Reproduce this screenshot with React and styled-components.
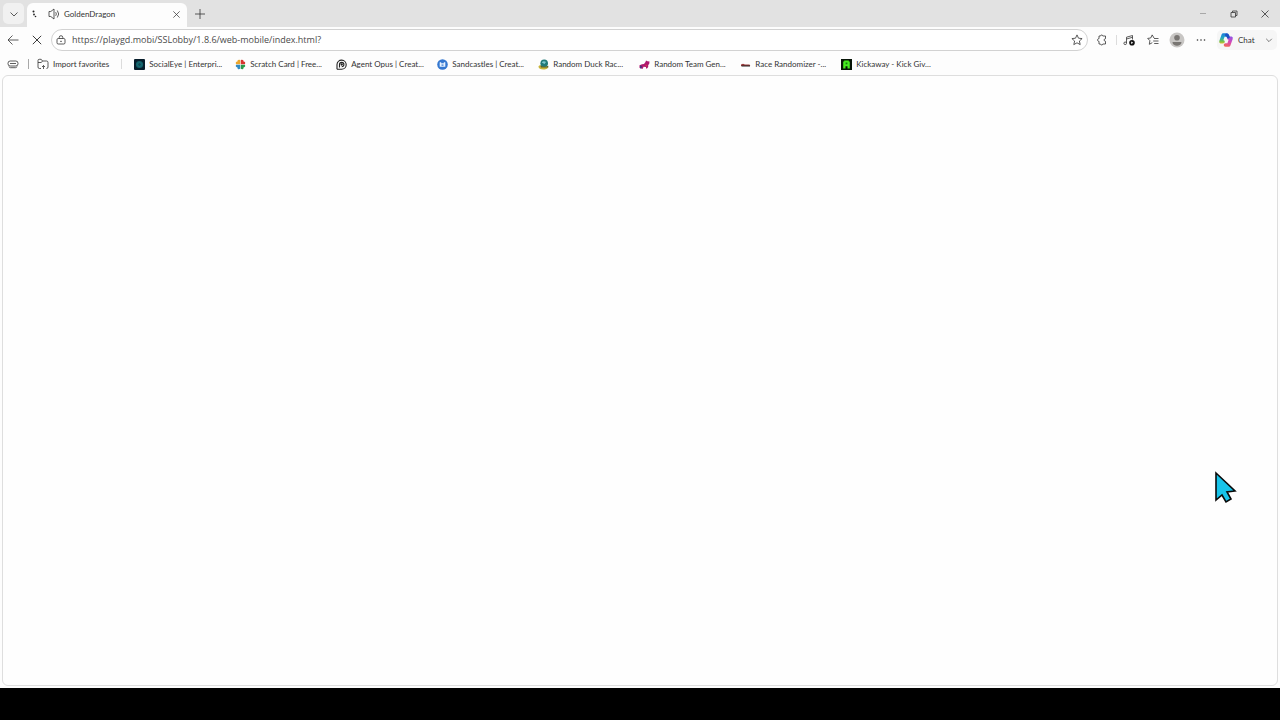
import styled, { createGlobalStyle } from "styled-components";

const bookmarks = [
  { label: "SocialEye | Enterpri...", icon: "eye" },
  { label: "Scratch Card | Free...", icon: "clover" },
  { label: "Agent Opus | Creat...", icon: "opus" },
  { label: "Sandcastles | Creat...", icon: "castle" },
  { label: "Random Duck Rac...", icon: "duck" },
  { label: "Random Team Gen...", icon: "team" },
  { label: "Race Randomizer -...", icon: "race" },
  { label: "Kickaway - Kick Giv...", icon: "kick" },
];

const favicons = {
  eye: (
    <>
      <rect width="11" height="11" rx="1" fill="#071d2b" />
      <circle cx="5.5" cy="5.5" r="3.6" fill="#11616a" />
      <circle cx="5.5" cy="5.5" r="1.8" fill="#0d4a55" stroke="#2a8088" strokeWidth="0.5" />
    </>
  ),
  clover: (
    <>
      <path d="M5.2 5.2V1.2C3.6.2 2.2 1.2 2.5 2.6 1 2.5.2 4 1.2 5.2Z" fill="#eba62e" />
      <path d="M5.8 5.2V1.2C7.4.2 8.8 1.2 8.5 2.6 10 2.5 10.8 4 9.8 5.2Z" fill="#d8352f" />
      <path d="M5.2 5.8v4C3.6 10.8 2.2 9.8 2.5 8.4 1 8.5.2 7 1.2 5.8Z" fill="#318bc4" />
      <path d="M5.8 5.8v4C7.4 10.8 8.8 9.8 8.5 8.4 10 8.5 10.8 7 9.8 5.8Z" fill="#299a4a" />
    </>
  ),
  opus: (
    <g fill="none" stroke="#222" strokeWidth="1.1">
      <path d="M1 10.3V5.500a4.600 4.600 0 1 1 4.600 4.800H1" />
      <path d="M3.500 8.500V5.600a2.200 2.200 0 1 1 2.200 2.200" />
      <circle cx="5.7" cy="5.5" r="0.6" fill="#222" />
    </g>
  ),
  castle: (
    <>
      <circle cx="5.5" cy="5.5" r="5.3" fill="#3578d0" />
      <path d="M2.700 3.200h1.500v1h2.600v-1h1.500v4.600H2.700Z" fill="#e9f3ff" />
      <path d="M4.500 5.500h2v1.200h-2Z" fill="#3578d0" />
    </>
  ),
  duck: (
    <>
      <path d="M.4 7.500C1.500 5.500 3 6.200 5 6.500l5 1c.5 2-1.500 3-4.500 3S.8 9.800.4 7.500Z" fill="#c8b43a" />
      <circle cx="6.2" cy="4.3" r="3.8" fill="#217a79" />
      <path d="M3.800 3.400c1-1.600 3-1.600 4.200-.3L6.500 5Z" fill="#7fc8cf" />
      <path d="M2.300 6.600c2 1.300 5 1.400 8 .2v1.600H3Z" fill="#59602d" />
    </>
  ),
  team: (
    <>
      <path d="M.5 6.200 3 5.300l2-.3L6.500 3 7 1.500l1.500.8 2 .2-.3 2.500-1 1v2L8 9.500H7V8L4.500 7.800l-.7 2H2.500L2 8.500.5 9Z" fill="#ad176f" />
      <path d="m1 6.500 2 .5-.5 2.500H1Z" fill="#48337c" />
      <path d="m6.300 5.500 2 .8-1.200 1.500Z" fill="#e1423d" />
    </>
  ),
  race: (
    <>
      <path d="M1 5.500 3 4.700l2 .7h4.500l.8 1.500H1Z" fill="#9b3a3b" />
      <path d="M1.500 6.500h8.500v1H1.500Z" fill="#222" />
    </>
  ),
  kick: (
    <>
      <rect width="11" height="11" fill="#071407" />
      <path d="M2.200 9.500v-7h1v-1h4.600v1h1v7H6.500V7.300h-2v2.200Z" fill="#47ec20" />
      <path d="M4.600 3.500h1.800v1.800H4.600Z" fill="#167b0e" />
    </>
  ),
};

const Icon = ({ size = 12, box = 12, children }) => (
  <Glyph width={size} height={size} viewBox={`0 0 ${box} ${box}`} aria-hidden="true">
    {children}
  </Glyph>
);

const CloseIcon = ({ size = 10 }) => (
  <Icon size={size} box={10}>
    <path d="m1.500 1.500 7 7m0-7-7 7" />
  </Icon>
);

const ChevronIcon = ({ size = 10 }) => (
  <Icon size={size} box={10}>
    <path d="m1.500 3.500 3.500 3.500 3.500-3.500" />
  </Icon>
);

const TabStrip = () => (
  <Strip>
    <TabSearch type="button" aria-label="Search tabs">
      <ChevronIcon />
    </TabSearch>
    <Tab>
      <Icon size={10} box={10}>
        <g fill="#222" stroke="none">
          <circle cx="2.5" cy="2.5" r="1" />
          <circle cx="3" cy="5.5" r="0.9" />
          <circle cx="4.5" cy="7.5" r="0.8" />
        </g>
      </Icon>
      <IconButton type="button" aria-label="Mute tab" $width={12}>
        <Icon>
          <path d="M1 3.500h1.800L6 1v10L2.800 8.500H1Z" />
          <path d="M7.700 4.200q1.300 1.800 0 3.600M9.300 2.500q2.800 3.500 0 7" />
        </Icon>
      </IconButton>
      <TabTitle>GoldenDragon</TabTitle>
      <IconButton type="button" aria-label="Close tab" $width={10}>
        <CloseIcon size={9} />
      </IconButton>
    </Tab>
    <IconButton type="button" aria-label="New tab" $width={26}>
      <Icon>
        <path d="M6 1v10M1 6h10" />
      </Icon>
    </IconButton>
    <WindowControls>
      <IconButton type="button" aria-label="Minimize" $width={31} $muted>
        <Icon size={8} box={8}>
          <path d="M1 3.500h6" />
        </Icon>
      </IconButton>
      <IconButton type="button" aria-label="Restore" $width={31}>
        <Icon size={8} box={8}>
          <path d="M1 2.500h4.500V7H1ZM2.500 2.200V1H7v4.500H5.800" />
        </Icon>
      </IconButton>
      <IconButton type="button" aria-label="Close window" $width={31}>
        <CloseIcon size={10} />
      </IconButton>
    </WindowControls>
  </Strip>
);

const starPath = "m6 .9 1.500 3.300 3.600.4-2.700 2.400.8 3.600L6 8.800l-3.200 1.800.8-3.600L.9 4.600l3.600-.4Z";

const Toolbar = () => (
  <Bar>
    <IconButton type="button" aria-label="Back" $width={24}>
      <Icon>
        <path d="M11.500 6H1m4.500-4.500L1 6l4.500 4.500" />
      </Icon>
    </IconButton>
    <IconButton type="button" aria-label="Stop loading" $width={24}>
      <CloseIcon size={12} />
    </IconButton>
    <AddressBar onSubmit={(e) => e.preventDefault()}>
      <IconButton type="button" aria-label="Site information" $width={10}>
        <Icon size={10} box={10}>
          <rect x="1" y="3.500" width="8" height="5.500" rx="1.200" />
          <path d="M3.200 3.500V2.500a1.800 1.800 0 0 1 3.600 0v1" />
          <circle cx="5" cy="6.300" r="0.400" />
        </Icon>
      </IconButton>
      <Address
        type="text"
        aria-label="Address"
        spellCheck="false"
        defaultValue="https://playgd.mobi/SSLobby/1.8.6/web-mobile/index.html?"
      />
      <IconButton type="button" aria-label="Add to favorites" $width={12}>
        <Icon>
          <path d={starPath} />
        </Icon>
      </IconButton>
    </AddressBar>
    <IconButton type="button" aria-label="Extensions" $width={28}>
      <Icon>
        <path d="M3 2h1.500c0-1.300 2.300-1.300 2.300 0H9.500v2.700C7.600 4.700 7.600 7.300 9.500 7.300V10H6.800c0 1.300-2.300 1.300-2.300 0H3V7.300C1 7.300 1 4.700 3 4.700Z" />
      </Icon>
    </IconButton>
    <Divider $light />
    <IconButton type="button" aria-label="Media controls" $width={24}>
      <Icon>
        <path d="M3.500 9V3.200l6-1.700v4M3.500 5l6-1.700" />
        <circle cx="2.200" cy="9.300" r="1.300" />
        <circle cx="9" cy="8.700" r="2.800" fill="#111" stroke="none" />
        <path d="m8.200 7.500 2 1.200-2 1.200Z" fill="#fff" stroke="none" />
      </Icon>
    </IconButton>
    <IconButton type="button" aria-label="Favorites" $width={24}>
      <Icon>
        <path d="M7 4 5.200.9 3.700 4 .7 4.400l2.200 2.300-.6 3.600 3-1.600M7 4.500h4.500M6.200 7h5.300M7.200 9.500h4.300" />
      </Icon>
    </IconButton>
    <IconButton type="button" aria-label="Profile" $width={24}>
      <Icon size={16} box={16}>
        <g stroke="none">
          <circle cx="8" cy="8" r="7.500" fill="#c8c6c4" />
          <circle cx="8" cy="5.800" r="2.800" fill="#797673" />
          <path d="M3.500 10h9c0 5-9 5-9 0Z" fill="#797673" />
        </g>
      </Icon>
    </IconButton>
    <IconButton type="button" aria-label="Settings and more" $width={24}>
      <Icon>
        <g fill="#333" stroke="none">
          <circle cx="2.500" cy="6" r="0.800" />
          <circle cx="6" cy="6" r="0.800" />
          <circle cx="9.500" cy="6" r="0.800" />
        </g>
      </Icon>
    </IconButton>
    <ChatGroup>
      <ChatButton type="button">
        <CopilotIcon />
        Chat
      </ChatButton>
      <IconButton type="button" aria-label="Chat options" $width={16}>
        <ChevronIcon size={8} />
      </IconButton>
    </ChatGroup>
  </Bar>
);

const CopilotIcon = () => (
  <Glyph width="16" height="16" viewBox="0 0 16 16" aria-hidden="true">
    <defs>
      <linearGradient id="cool" gradientUnits="userSpaceOnUse" x1="5" y1="1" x2="5" y2="12">
        <stop offset="0" stopColor="#1b78dc" />
        <stop offset="0.45" stopColor="#22a9c4" />
        <stop offset="0.75" stopColor="#6fbf4a" />
        <stop offset="1" stopColor="#e8c02a" />
      </linearGradient>
      <linearGradient id="warm" gradientUnits="userSpaceOnUse" x1="12" y1="4" x2="8" y2="15">
        <stop offset="0" stopColor="#8f55e6" />
        <stop offset="0.5" stopColor="#d648b4" />
        <stop offset="1" stopColor="#f46a4e" />
      </linearGradient>
    </defs>
    <g strokeWidth="3.6" strokeLinecap="round">
      <path d="M8.500 3H5.300L3 9.700H5" stroke="url(#cool)" />
      <path d="M7.500 13h3.200L13 6.300H11" stroke="url(#warm)" />
      <path d="M8.500 3h.8l1 2" stroke="#1d4fc4" strokeWidth="3" />
    </g>
  </Glyph>
);

const FavoritesBar = () => (
  <Favorites aria-label="Favorites bar">
    <IconButton type="button" aria-label="Workspaces" $width={24}>
      <Icon>
        <rect x="1" y="3" width="10" height="5" rx="2.200" />
        <path d="M3 5.500h6M2 8.500q.3 1.200 1.500 1.200h5q1.200 0 1.500-1.200" />
      </Icon>
    </IconButton>
    <ImportGroup>
      <Divider />
      <ImportButton type="button">
        <Icon>
          <path d="M4 10.500H2.500Q1 10.500 1 9V2.500Q1 1.300 2.200 1.300h2L5.500 3h4Q11 3 11 4.500V9q0 1.500-1.500 1.500M1 4.500h3.300L5.500 3M6.500 11V7.500m-1.500 1.500 1.500-1.500L8 9" />
        </Icon>
        Import favorites
      </ImportButton>
      <Divider $light />
    </ImportGroup>
    <BookmarkList>
      {bookmarks.map(({ label, icon }) => (
        <li key={label}>
          <Bookmark href="#">
            <Icon size={11} box={11}>
              <g stroke="none">{favicons[icon]}</g>
            </Icon>
            <span>{label}</span>
          </Bookmark>
        </li>
      ))}
    </BookmarkList>
  </Favorites>
);

const App = () => (
  <Wrapper>
    <GlobalStyle />
    <TabStrip />
    <Toolbar />
    <FavoritesBar />
    <Viewport>
      <Pointer width="24" height="34" viewBox="0 0 24 34" aria-hidden="true">
        <path
          d="M2 2v27l6-5 4 7 5-3-4-7 8-1Z"
          fill="#17c4ea"
          stroke="#0a0a0a"
          strokeWidth="1.600"
        />
      </Pointer>
    </Viewport>
    <BottomBand />
  </Wrapper>
);

const GlobalStyle = createGlobalStyle`
  * {
    box-sizing: border-box;
  }
  body {
    margin: 0;
    font-family: Lato, "Open Sans", sans-serif;
    font-size: 8px;
    line-height: 12px;
    color: #333;
  }
  button, input {
    font: inherit;
    color: inherit;
    border: none;
    background: transparent;
    padding: 0;
    margin: 0;
  }
`;

const Wrapper = styled.div`
  display: flex;
  flex-direction: column;
  min-height: 100vh;
  background: #fdfdfd;
`;

const Glyph = styled.svg`
  display: block;
  flex: none;
  fill: none;
  stroke: currentColor;
  stroke-width: 0.8;
  stroke-linejoin: round;
`;

const IconButton = styled.button`
  display: flex;
  flex: none;
  align-items: center;
  justify-content: center;
  width: ${(props) => props.$width}px;
  height: 20px;
  color: ${(props) => (props.$muted ? "#999" : "#333")};
`;

const Divider = styled.span`
  flex: none;
  width: 1px;
  height: 10px;
  background: ${(props) => (props.$light ? "#dcdcdc" : "#a8a8a8")};
`;

const Strip = styled.header`
  display: flex;
  align-items: center;
  height: 27px;
  padding-left: 3px;
  background: #e2e2e2;
`;

const TabSearch = styled.button`
  display: flex;
  align-items: center;
  justify-content: center;
  width: 21px;
  height: 21px;
  border-radius: 5px;
  background: #f1f1f1;
`;

const Tab = styled.div`
  display: flex;
  align-items: center;
  align-self: flex-end;
  gap: 4px;
  width: 160px;
  height: 24px;
  margin-left: 3px;
  padding: 0 6px 2px 4px;
  border-radius: 6px 6px 0 0;
  background: #fdfdfd;

  > button:first-of-type {
    margin-left: 3px;
  }
`;

const TabTitle = styled.span`
  flex: 1;
`;

const WindowControls = styled.div`
  display: flex;
  margin-left: auto;
`;

const Bar = styled.div`
  display: flex;
  align-items: center;
  height: 26px;
  padding: 0 3px 0 1px;
`;

const AddressBar = styled.form`
  display: flex;
  flex: 1;
  align-items: center;
  gap: 6px;
  height: 22px;
  margin-left: 2px;
  padding: 0 4px;
  border: 1px solid #d2d2d2;
  border-radius: 11px;
  background: #fff;
`;

const Address = styled.input`
  flex: 1;
  min-width: 0;
  font-family: "Open Sans", "Noto Sans", sans-serif;
  font-size: 9px;
  color: #4a4a4a;
  outline: none;
`;

const ChatGroup = styled.div`
  display: flex;
  align-items: center;
  justify-content: space-between;
  width: 60px;
  height: 20px;
  margin-left: 4px;
  border-radius: 5px;
  background: #f6f6f6;
`;

const ChatButton = styled.button`
  display: flex;
  align-items: center;
  gap: 4px;
  padding-left: 1px;
`;

const Favorites = styled.nav`
  display: flex;
  align-items: center;
  height: 22px;
  padding-left: 1px;
`;

const ImportGroup = styled.div`
  display: flex;
  align-items: center;
  margin-left: 3px;
`;

const ImportButton = styled.button`
  display: flex;
  align-items: center;
  gap: 4px;
  margin: 0 12px 0 8px;
  white-space: nowrap;
`;

const BookmarkList = styled.ul`
  display: flex;
  gap: 14px;
  margin: 0;
  padding: 0 0 0 12px;
  list-style: none;
`;

const Bookmark = styled.a`
  display: flex;
  align-items: center;
  gap: 4px;
  width: 87px;
  color: inherit;
  text-decoration: none;
  white-space: nowrap;
`;

const Viewport = styled.main`
  position: relative;
  flex: 1;
  margin: 0 2px 2px;
  border: 1px solid #dedede;
  border-radius: 6px;
  background: #fefefe;
`;

const Pointer = styled.svg`
  position: absolute;
  right: 39px;
  bottom: 180px;
`;

const BottomBand = styled.footer`
  height: 32px;
  background: #000;
`;

export default App;
